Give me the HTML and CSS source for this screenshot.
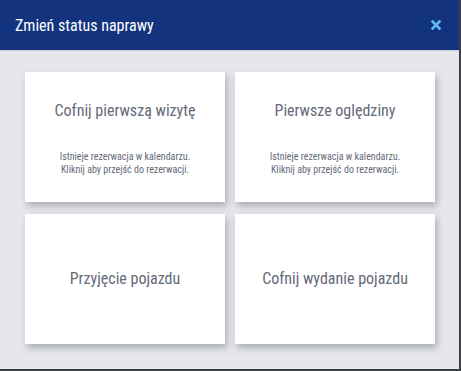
FILE: index.html
```html
<!DOCTYPE html>
<html lang="pl">
<head>
  <meta charset="UTF-8">
  <title>Zmień status naprawy</title>
  <link rel="stylesheet" href="styles.css">
</head>
<body>
  <div class="modal">
    <div class="modal-header">
      <h1 class="modal-title">Zmień status naprawy</h1>
      <button class="close-btn" aria-label="Zamknij">
        <svg width="10" height="10" viewBox="0 0 10 10">
          <path d="M1.5 1.5 L8.5 8.5 M8.5 1.5 L1.5 8.5" stroke="#5cbdf5" stroke-width="2.6" stroke-linecap="square"/>
        </svg>
      </button>
    </div>
    <div class="modal-body">
      <div class="status-grid">
        <a class="status-card with-note" href="#">
          <div class="card-title">Cofnij pierwszą wizytę</div>
          <div class="card-note">Istnieje rezerwacja w kalendarzu.<br>Kliknij aby przejść do rezerwacji.</div>
        </a>
        <a class="status-card with-note" href="#">
          <div class="card-title">Pierwsze oględziny</div>
          <div class="card-note">Istnieje rezerwacja w kalendarzu.<br>Kliknij aby przejść do rezerwacji.</div>
        </a>
        <a class="status-card" href="#">
          <div class="card-title">Przyjęcie pojazdu</div>
        </a>
        <a class="status-card" href="#">
          <div class="card-title">Cofnij wydanie pojazdu</div>
        </a>
      </div>
    </div>
  </div>
</body>
</html>
```

FILE: styles.css
```css
body {
  margin: 0;
  font-family: "Roboto Condensed", Roboto, sans-serif;
  background-color: #e6e7ec;
}
.modal {
  width: 459px;
  height: 369px;
  border-right: 2px solid #3c3f46;
  border-bottom: 2px solid #3c3f46;
  background-color: #e6e7ec;
  display: flex;
  flex-direction: column;
}
.modal-header {
  height: 50px;
  background-color: #14337f;
  border-bottom: 1px solid #c9ccd6;
  display: flex;
  align-items: center;
  justify-content: space-between;
  padding: 0 18px 0 15px;
}
.modal-title {
  margin: 0;
  color: #fff;
  font-size: 16px;
  font-weight: 400;
  font-stretch: condensed;
}
.close-btn {
  background: none;
  border: 0;
  padding: 0;
  width: 10px;
  height: 10px;
  display: flex;
  cursor: pointer;
}
.modal-body {
  flex: 1;
  padding: 21px 24px 0 25px;
}
.status-grid {
  display: grid;
  grid-template-columns: 200px 200px;
  grid-auto-rows: 130px;
  column-gap: 10px;
  row-gap: 12px;
}
.status-card {
  background-color: #fff;
  box-shadow: 2px 4px 7px rgba(60, 64, 80, 0.35);
  display: flex;
  flex-direction: column;
  align-items: center;
  justify-content: center;
  text-align: center;
  color: #646a78;
  text-decoration: none;
}
.status-card.with-note {
  justify-content: flex-start;
  padding-top: 29px;
}
.card-title {
  font-size: 16px;
  font-stretch: condensed;
  line-height: 20px;
}
.card-note {
  margin-top: 29px;
  font-size: 10px;
  line-height: 13px;
  font-stretch: condensed;
}
```
